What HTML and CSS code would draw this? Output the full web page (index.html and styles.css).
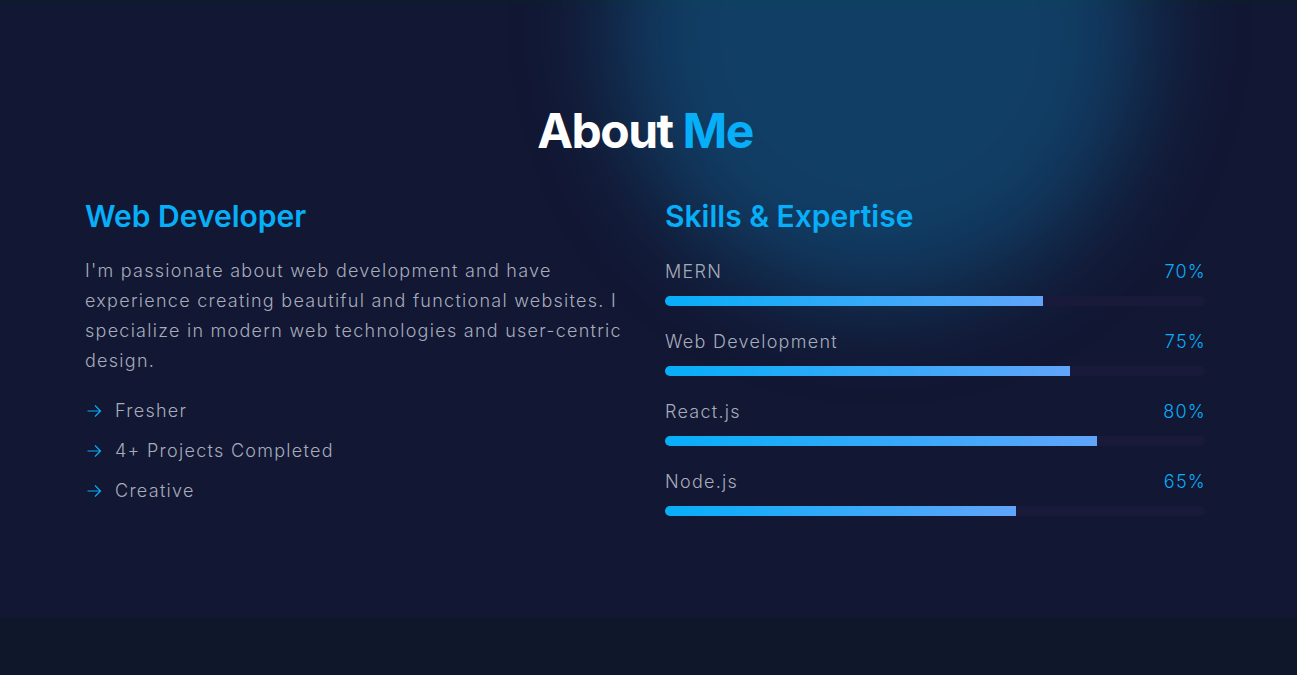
FILE: index.html
```html
<!DOCTYPE html>
<html lang="en">
<head>
<meta charset="utf-8">
<title>About Me</title>
<link rel="stylesheet" href="styles.css">
</head>
<body>
<div class="glow"></div>
<div class="topband"></div>
<section class="about">
  <div class="container">
    <h2 class="title">About <span class="accent">Me</span></h2>
    <div class="columns">
      <div class="col">
        <h3 class="subhead">Web Developer</h3>
        <p class="bio">I'm passionate about web development and have experience creating beautiful and functional websites. I specialize in modern web technologies and user-centric design.</p>
        <ul class="facts">
          <li><svg class="arrow" viewBox="0 0 16 16" width="16" height="16"><path d="M1.5 8h13M9 2.5 14.5 8 9 13.5" fill="none" stroke="currentColor" stroke-width="1.2"/></svg>Fresher</li>
          <li><svg class="arrow" viewBox="0 0 16 16" width="16" height="16"><path d="M1.5 8h13M9 2.5 14.5 8 9 13.5" fill="none" stroke="currentColor" stroke-width="1.2"/></svg>4+ Projects Completed</li>
          <li><svg class="arrow" viewBox="0 0 16 16" width="16" height="16"><path d="M1.5 8h13M9 2.5 14.5 8 9 13.5" fill="none" stroke="currentColor" stroke-width="1.2"/></svg>Creative</li>
        </ul>
      </div>
      <div class="col">
        <h3 class="subhead skills-head">Skills &amp; Expertise</h3>
        <div class="skills">
          <div class="skill">
            <div class="skill-row"><span class="skill-name">MERN</span><span class="skill-pct">70%</span></div>
            <div class="track"><div class="fill" style="width:70%"></div></div>
          </div>
          <div class="skill">
            <div class="skill-row"><span class="skill-name">Web Development</span><span class="skill-pct">75%</span></div>
            <div class="track"><div class="fill" style="width:75%"></div></div>
          </div>
          <div class="skill">
            <div class="skill-row"><span class="skill-name">React.js</span><span class="skill-pct">80%</span></div>
            <div class="track"><div class="fill" style="width:80%"></div></div>
          </div>
          <div class="skill">
            <div class="skill-row"><span class="skill-name">Node.js</span><span class="skill-pct">65%</span></div>
            <div class="track"><div class="fill" style="width:65%"></div></div>
          </div>
        </div>
      </div>
    </div>
  </div>
</section>
</body>
</html>
```
FILE: styles.css
```css
* { box-sizing: border-box; }
html, body { margin: 0; padding: 0; }
body {
  background: #0f172a;
  font-family: Inter, "Noto Sans", sans-serif;
  position: relative;
  min-height: 675px;
  overflow: hidden;
}
.topband {
  height: 5px;
  background: #0f1a2e;
}
.glow {
  position: absolute;
  left: 615px;
  top: -240px;
  width: 530px;
  height: 540px;
  border-radius: 50%;
  background: rgba(14, 165, 233, 0.28);
  filter: blur(50px);
  pointer-events: none;
  z-index: 1;
}
.about {
  background: #121733;
  padding: 102px 7px 101px 0;
}
.container {
  position: relative;
  z-index: 2;
  width: 1120px;
  margin: 0 auto;
}
.title {
  margin: 0 0 43px;
  text-align: center;
  font-size: 48px;
  line-height: 48px;
  font-weight: 700;
  letter-spacing: -1.5px;
  color: #ffffff;
}
.accent { color: #07aef8; }
.columns {
  display: grid;
  grid-template-columns: 540px 540px;
  column-gap: 40px;
}
.subhead {
  margin: 0 0 22px;
  font-size: 30px;
  line-height: 36px;
  font-weight: 600;
  color: #07aef8;
}
.skills-head { margin-bottom: 24px; }
.bio {
  margin: 0 0 21px;
  font-size: 18px;
  line-height: 30px;
  font-weight: 300;
  letter-spacing: 1.26px;
  color: #a7acbb;
}
.facts {
  list-style: none;
  margin: 0;
  padding: 0;
  display: flex;
  flex-direction: column;
  gap: 12px;
}
.facts li {
  display: flex;
  align-items: center;
  gap: 13px;
  font-size: 18px;
  line-height: 28px;
  font-weight: 300;
  letter-spacing: 1.28px;
  color: #a7acbb;
}
.arrow {
  color: #07aef8;
  flex: none;
  margin-left: 1px;
}
.skills {
  display: flex;
  flex-direction: column;
  gap: 22px;
}
.skill-row {
  display: flex;
  justify-content: space-between;
  font-size: 18px;
  line-height: 28px;
  font-weight: 300;
  letter-spacing: 1.28px;
  margin-bottom: 10px;
}
.skill-name { color: #a7acbb; }
.skill-pct { color: #07aef8; margin-right: -1px; }
.track {
  height: 10px;
  border-radius: 9999px;
  background: #191a3a;
  overflow: hidden;
}
.fill {
  height: 100%;
  background: linear-gradient(90deg, #07aef8, #60a5fa);
}
```
